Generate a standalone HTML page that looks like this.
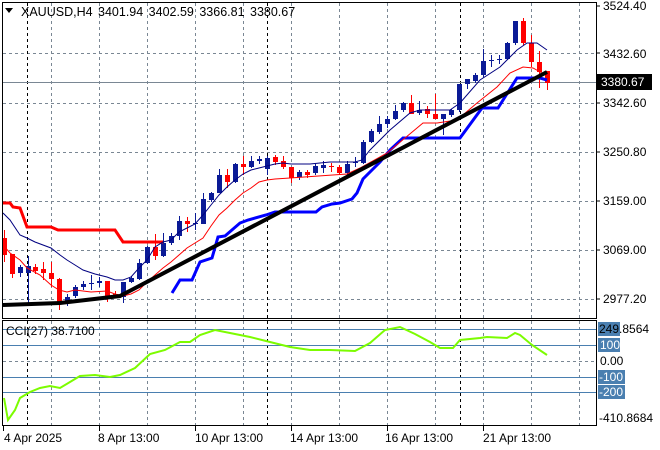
<!DOCTYPE html>
<html><head><meta charset="utf-8"><style>
html,body{margin:0;padding:0;background:#fff;width:660px;height:450px;overflow:hidden}
svg{display:block}
text{font-family:"Liberation Sans",sans-serif;font-size:12px;fill:#000}
</style></head><body>
<svg id="s" width="660" height="450" xmlns="http://www.w3.org/2000/svg">
<g stroke="#7a8794" stroke-dasharray="3,3" stroke-width="1">
<line x1="51.5" y1="3" x2="51.5" y2="318"/><line x1="99.5" y1="3" x2="99.5" y2="318"/><line x1="147.5" y1="3" x2="147.5" y2="318"/><line x1="195.5" y1="3" x2="195.5" y2="318"/><line x1="243.5" y1="3" x2="243.5" y2="318"/><line x1="291.5" y1="3" x2="291.5" y2="318"/><line x1="339.5" y1="3" x2="339.5" y2="318"/><line x1="387.5" y1="3" x2="387.5" y2="318"/><line x1="435.5" y1="3" x2="435.5" y2="318"/><line x1="483.5" y1="3" x2="483.5" y2="318"/><line x1="531.5" y1="3" x2="531.5" y2="318"/><line x1="579.5" y1="3" x2="579.5" y2="318"/>
<line x1="51.5" y1="321" x2="51.5" y2="425"/><line x1="99.5" y1="321" x2="99.5" y2="425"/><line x1="147.5" y1="321" x2="147.5" y2="425"/><line x1="195.5" y1="321" x2="195.5" y2="425"/><line x1="243.5" y1="321" x2="243.5" y2="425"/><line x1="291.5" y1="321" x2="291.5" y2="425"/><line x1="339.5" y1="321" x2="339.5" y2="425"/><line x1="387.5" y1="321" x2="387.5" y2="425"/><line x1="435.5" y1="321" x2="435.5" y2="425"/><line x1="483.5" y1="321" x2="483.5" y2="425"/><line x1="531.5" y1="321" x2="531.5" y2="425"/><line x1="579.5" y1="321" x2="579.5" y2="425"/>
<line x1="3" y1="53.5" x2="596" y2="53.5"/><line x1="3" y1="103.5" x2="596" y2="103.5"/><line x1="3" y1="152.5" x2="596" y2="152.5"/><line x1="3" y1="201.5" x2="596" y2="201.5"/><line x1="3" y1="250.5" x2="596" y2="250.5"/><line x1="3" y1="299.5" x2="596" y2="299.5"/>
<line x1="3" y1="361.5" x2="596" y2="361.5"/>
</g>
<g stroke="#000" stroke-dasharray="3,3"><line x1="27.5" y1="3" x2="27.5" y2="318"/><line x1="267.5" y1="3" x2="267.5" y2="318"/><line x1="460.5" y1="3" x2="460.5" y2="318"/>
<line x1="27.5" y1="321" x2="27.5" y2="425"/><line x1="267.5" y1="321" x2="267.5" y2="425"/><line x1="460.5" y1="321" x2="460.5" y2="425"/></g>
<line x1="3" y1="82.5" x2="596" y2="82.5" stroke="#7a8794"/>
<g stroke="#4a7fb0"><line x1="3" y1="329.5" x2="596" y2="329.5"/><line x1="3" y1="345.5" x2="596" y2="345.5"/><line x1="3" y1="377.5" x2="596" y2="377.5"/><line x1="3" y1="392.5" x2="596" y2="392.5"/></g>
<g id="c"></g>
<polyline fill="none" stroke="#f00" stroke-width="3" points="3,203 10,203 13,207 20,208 27,227 51,227 58,230 115,230 123,242 163,242"/>
<polyline fill="none" stroke="#00f" stroke-width="3" points="172,293 180,280 192,280 200,262 212,258 218,237 225,236 240,223 248,220 266,215 275,212 316,212 322,207 332,204 340,203 352,199 357,193 363,179 373,169 380,162 390,150 403,138 460,138 482,108 498,108 517,78 540,78 547,80"/>
<polyline fill="none" stroke="#000080" stroke-width="1" points="3,213 10,220 20,235 27,238 35,242 51,248 60,255 67,260 75,265 83,270 95,274 107,277 115,280 123,280 131,277 139,268 147,260 155,247 163,242 171,240 179,232 187,228 195,224 203,215 211,205 219,195 227,187 235,180 243,174 251,170 259,168 267,166 275,164 283,163 291,164 310,164 330,162 355,162 362,160 370,150 390,130 410,113 420,110 450,110 460,103 480,80 500,67 517,50 527,43 537,43 547,50"/>
<polyline fill="none" stroke="#f00" stroke-width="1" points="3,245 10,253 20,260 27,268 40,275 51,285 59,290 67,292 75,290 91,292 107,291 115,294 123,296 131,294 139,290 147,282 155,275 163,268 171,262 179,255 187,248 195,243 203,238 211,226 219,215 227,208 235,200 243,193 251,188 259,182 267,180 275,179 290,178 347,174 360,168 387,153 423,123 437,123 457,120 477,103 497,87 510,73 523,67 533,68 542,73"/>
<polyline fill="none" stroke="#000" stroke-width="4" points="3,305 60,303 120,296 547,72"/>
<polyline fill="none" stroke="#7CFC00" stroke-width="2" points="4,398 8,420 15,410 20,398 30,392 40,388 50,386 60,388 70,382 80,376 95,375 110,377 120,375 135,368 150,354 165,350 180,342 190,342 200,335 215,330 230,333 250,337 270,342 290,347 310,350 330,350 355,351 370,343 385,330 400,327 415,334 430,342 440,348 453,348 460,340 480,338 487,337 507,338 515,333 520,335 532,345 547,355"/>
<rect x="2.5" y="2.5" width="594" height="316" fill="none" stroke="#000"/>
<rect x="2.5" y="320.5" width="594" height="105" fill="none" stroke="#000"/>
<polygon points="5,8 13,8 9,13" fill="#000"/>
<text x="21" y="16" style="font-size:12.5px;word-spacing:2px">XAUUSD,H4  3401.94 3402.59 3366.81 3380.67</text>
<text x="6" y="335">CCI(27) 38.7100</text>
<g>
<text x="603" y="10">3524.40</text><text x="603" y="58">3432.60</text><text x="603" y="107">3342.60</text><text x="603" y="156">3250.80</text><text x="603" y="205">3159.00</text><text x="603" y="254">3069.00</text><text x="603" y="303">2977.20</text>
</g>
<rect x="597" y="74" width="55" height="16" fill="#000"/><text x="601" y="86" style="fill:#fff">3380.67</text>
<rect x="598" y="322" width="22" height="14" fill="#4a7fb0"/><text x="599" y="333">249.8564</text>
<rect x="598" y="338" width="22" height="14" fill="#4a7fb0"/><text x="600" y="349" style="fill:#fff">100</text>
<text x="600" y="365">0.00</text>
<rect x="598" y="370" width="27" height="14" fill="#4a7fb0"/><text x="599" y="381" style="fill:#fff">-100</text>
<rect x="598" y="385" width="27" height="14" fill="#4a7fb0"/><text x="599" y="396" style="fill:#fff">-200</text>
<text x="599" y="422">-410.8684</text>
<g stroke="#000"><line x1="596" y1="6" x2="600" y2="6"/><line x1="596" y1="53" x2="600" y2="53"/><line x1="596" y1="103" x2="600" y2="103"/><line x1="596" y1="152" x2="600" y2="152"/><line x1="596" y1="201" x2="600" y2="201"/><line x1="596" y1="250" x2="600" y2="250"/><line x1="596" y1="299" x2="600" y2="299"/>
<line x1="3.5" y1="426" x2="3.5" y2="431"/><line x1="99.5" y1="426" x2="99.5" y2="431"/><line x1="195.5" y1="426" x2="195.5" y2="431"/><line x1="291.5" y1="426" x2="291.5" y2="431"/><line x1="387.5" y1="426" x2="387.5" y2="431"/><line x1="483.5" y1="426" x2="483.5" y2="431"/></g>
<text x="4" y="442">4 Apr 2025</text><text x="98" y="442">8 Apr 13:00</text><text x="195" y="442">10 Apr 13:00</text><text x="290" y="442">14 Apr 13:00</text><text x="385" y="442">16 Apr 13:00</text><text x="483" y="442">21 Apr 13:00</text>
</svg>
<script>
var d=[[4,238,255,230,262,0],[12,254,274,254,278,0],[20,267,273,265,277,1],[28,266,273,256,303,1],[35,267,271,264,274,0],[43,269,273,262,280,0],[51,273,279,262,287,0],[59,279,303,278,310,0],[67,297,303,294,306,1],[75,287,296,285,298,1],[83,284,287,281,290,1],[91,283,284,275,290,1],[99,281,283,277,287,1],[107,281,296,281,302,0],[115,294,297,291,298,0],[123,282,297,282,303,1],[131,278,282,276,283,1],[139,263,279,259,280,1],[147,247,263,246,264,1],[155,247,256,234,260,0],[163,243,256,233,257,1],[171,236,243,233,245,1],[179,221,236,216,240,1],[187,221,224,217,232,0],[195,223,224,213,230,1],[203,199,224,193,224,1],[211,193,200,192,202,1],[219,175,193,169,193,1],[227,175,182,169,188,0],[235,164,182,163,183,1],[243,164,167,156,175,0],[251,161,167,156,168,1],[259,159,161,156,164,1],[267,158,169,156,175,1],[275,157,162,155,165,0],[283,161,167,156,169,0],[291,167,178,167,183,0],[299,172,177,170,180,1],[307,172,175,170,178,0],[315,166,173,164,175,1],[323,165,168,161,173,1],[331,166,167,163,172,0],[339,167,173,165,175,0],[347,164,173,161,175,1],[355,162,163,157,167,1],[363,142,163,140,164,1],[371,131,142,129,143,1],[379,124,132,116,134,1],[387,119,124,116,128,1],[395,111,119,105,120,1],[403,103,110,102,112,1],[411,103,114,95,114,0],[419,110,113,101,115,1],[427,109,114,106,118,0],[435,114,119,94,119,0],[443,114,119,114,135,1],[451,110,115,109,117,1],[459,84,110,84,112,1],[467,79,84,79,89,1],[475,75,81,73,83,1],[483,61,75,49,77,1],[491,60,61,55,67,1],[499,59,60,55,64,1],[507,43,59,42,60,1],[515,21,43,21,45,1],[523,21,43,18,45,0],[531,43,62,35,67,0],[539,62,72,51,88,0],[547,71,83,71,90,0]];
var g=document.getElementById('c'),h='';
d.forEach(function(c){var col=c[5]?'#0a1a96':'#f00';
h+='<line x1="'+(c[0]+.5)+'" y1="'+c[3]+'" x2="'+(c[0]+.5)+'" y2="'+c[4]+'" stroke="'+col+'"/>';
h+='<rect x="'+(c[0]-2)+'" y="'+c[1]+'" width="5" height="'+Math.max(1,c[2]-c[1])+'" fill="'+col+'"/>';});
g.innerHTML=h;
</script>
</body></html>
